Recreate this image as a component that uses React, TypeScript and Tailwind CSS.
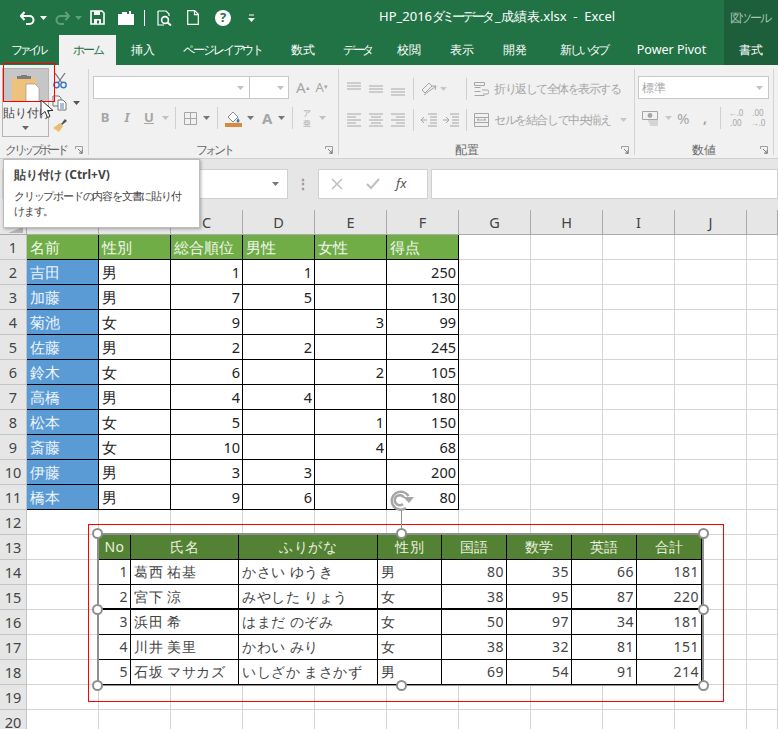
import React from "react";

const rows: [string, string, string, string, string, string][] = [
  ["吉田", "男", "1", "1", "", "250"],
  ["加藤", "男", "7", "5", "", "130"],
  ["菊池", "女", "9", "", "3", "99"],
  ["佐藤", "男", "2", "2", "", "245"],
  ["鈴木", "女", "6", "", "2", "105"],
  ["高橋", "男", "4", "4", "", "180"],
  ["松本", "女", "5", "", "1", "150"],
  ["斎藤", "女", "10", "", "4", "68"],
  ["伊藤", "男", "3", "3", "", "200"],
  ["橋本", "男", "9", "6", "", "80"],
];
const head = ["名前", "性別", "総合順位", "男性", "女性", "得点"];
const letters = ["A", "B", "C", "D", "E", "F", "G", "H", "I", "J", ""];

const picHead = ["No", "氏名", "ふりがな", "性別", "国語", "数学", "英語", "合計"];
const picRows = [
  ["1", "葛西 祐基", "かさい ゆうき", "男", "80", "35", "66", "181"],
  ["2", "宮下 涼", "みやした りょう", "女", "38", "95", "87", "220"],
  ["3", "浜田 希", "はまだ のぞみ", "女", "50", "97", "34", "181"],
  ["4", "川井 美里", "かわい みり", "女", "38", "32", "81", "151"],
  ["5", "石坂 マサカズ", "いしざか まさかず", "男", "69", "54", "91", "214"],
];

const tabs = [
  { t: "ファイル", c: "w-[59px] text-white pr-[4px] tracking-[-3.5px]" },
  { t: "ホーム", c: "w-[57px] bg-[#f1f1f1] text-[#217346] tracking-[-2px]" },
  { t: "挿入", c: "w-[53px] text-white" },
  { t: "ページ レイアウト", c: "w-[107px] text-white tracking-[-2.3px]" },
  { t: "数式", c: "w-[53px] text-white" },
  { t: "データ", c: "w-[53px] text-white pl-[4px] tracking-[-2.5px]" },
  { t: "校閲", c: "w-[53px] text-white" },
  { t: "表示", c: "w-[53px] text-white" },
  { t: "開発", c: "w-[53px] text-white" },
  { t: "新しいタブ", c: "w-[86px] text-white tracking-[-2.4px]" },
  { t: "Power Pivot", c: "w-[89px] text-white text-[12.5px]" },
];

const Caret = ({ className = "", color = "#a6a6a6" }: { className?: string; color?: string }) => (
  <svg width="7" height="4" viewBox="0 0 7 4" className={className}>
    <path d="M0 0h7L3.5 4z" fill={color} />
  </svg>
);

const VSep = ({ className = "" }: { className?: string }) => <div className={`w-px h-[22px] bg-[#d0d0d0] ${className}`} />;

const GroupLabel = ({ children, className = "" }: { children: React.ReactNode; className?: string }) => (
  <div className={`h-[10px] flex items-center justify-center text-[12px] text-[#666] whitespace-nowrap ${className}`}>{children}</div>
);

const Launcher = () => (
  <svg width="8" height="8" viewBox="0 0 8 8" className="absolute right-[5px] bottom-[1px]">
    <path d="M.5 3V.5H3M.5.5h7v7H5" fill="none" stroke="#a0a0a0" />
    <path d="M3 3l4 4M4 7h3V4" fill="none" stroke="#808080" />
  </svg>
);

const Lines = ({ kind }: { kind: "top" | "mid" | "bot" | "left" | "center" | "right" }) => {
  const d: Record<string, string> = {
    top: "M0 1h14M0 4h14M0 7h14",
    mid: "M0 4h14M0 7h14M0 10h14",
    bot: "M0 7h14M0 10h14M0 13h14",
    left: "M0 1h14M0 4h9M0 7h14M0 10h9M0 13h14",
    center: "M0 1h14M2 4h10M0 7h14M2 10h10M0 13h14",
    right: "M0 1h14M5 4h9M0 7h14M5 10h9M0 13h14",
  };
  return (
    <svg width="14" height="14" viewBox="0 0 14 14">
      <path d={d[kind]} stroke="#a8a8a8" strokeWidth="1" fill="none" />
    </svg>
  );
};

function Handle() {
  return <div className="w-[11px] h-[11px] rounded-full bg-white border-2 border-[#8f8f8f]" />;
}

function TitleBar() {
  return (
    <div className="h-[35px] flex items-center bg-[#217346] relative">
      <div className="flex items-center pl-[20px]">
        <svg width="15" height="14" viewBox="0 0 15 14">
          <path d="M1 5h8.5a4 4 0 0 1 0 8H6M4.500 1L1 5l3.500 4" fill="none" stroke="#fff" strokeWidth="2" />
        </svg>
        <Caret className="ml-[5px]" color="#ffffff" />
        <svg width="15" height="14" viewBox="0 0 15 14" className="ml-[8px]">
          <path d="M14 5H5.500a4 4 0 0 0 0 8H9M10.500 1L14 5l-3.500 4" fill="none" stroke="#5e9f7c" strokeWidth="2" />
        </svg>
        <Caret className="ml-[5px]" color="#5e9f7c" />
        <svg width="15" height="15" viewBox="0 0 15 15" className="ml-[8px]">
          <path d="M1 1h11l2 2v11H1z" fill="none" stroke="#fff" strokeWidth="1.6" />
          <path d="M4 1h6v4H4zM4 9h7v5H4z" fill="#fff" />
          <path d="M7 10.500h2v3H7z" fill="#217346" />
        </svg>
        <svg width="16" height="14" viewBox="0 0 16 14" className="ml-[13px]">
          <path d="M0 3h4V1h5v2h7v11H0z" fill="#fff" />
          <path d="M11 0h2v3h-2z" fill="#fff" />
        </svg>
        <div className="w-px h-[16px] bg-white ml-[10px]" />
        <svg width="15" height="16" viewBox="0 0 15 16" className="ml-[12px]">
          <path d="M1 1h8l3 3v2M1 1v14h6" fill="none" stroke="#fff" strokeWidth="1.2" />
          <circle cx="8" cy="10" r="3.4" fill="none" stroke="#fff" strokeWidth="1.6" />
          <path d="M10.500 12.500L14 15.500" stroke="#fff" strokeWidth="2" />
        </svg>
        <svg width="12" height="15" viewBox="0 0 12 15" className="ml-[15px]">
          <path d="M.7.7h7l3.600 3.600v10H.7zM7.500.7v4h3.800" fill="none" stroke="#fff" strokeWidth="1.2" />
        </svg>
        <div className="w-[16px] h-[16px] ml-[16px] rounded-full bg-white flex items-center justify-center text-[13px] font-bold leading-none text-[#217346]">?</div>
        <svg width="7" height="8" viewBox="0 0 7 8" className="ml-[17px]">
          <path d="M1 1h5" stroke="#fff" />
          <path d="M0 4h7L3.500 8z" fill="#fff" />
        </svg>
      </div>
      <div className="absolute left-[379px] top-[7px] text-[13px] leading-[19px] text-white whitespace-pre">
        HP_2016<span className="tracking-[-3px]">ダミーデータ</span><span className="ml-[3px]">_成績表.xlsx</span>{"  -  "}Excel
      </div>
      <div className="ml-auto w-[54px] h-full bg-[#1c5f3a] flex items-center pl-[6px] text-[12px] text-[#a9c6b6] whitespace-nowrap tracking-[-2px]">
        図ツール
      </div>
    </div>
  );
}

function TabBar() {
  return (
    <div className="h-[30px] flex bg-[#217346] text-[12px]">
      {tabs.map((t) => (
        <div key={t.t} className={`h-full flex items-center justify-center whitespace-nowrap ${t.c}`}>
          {t.t}
        </div>
      ))}
      <div className="ml-auto w-[54px] h-full bg-[#1c5f3a] flex items-center justify-center text-white">書式</div>
    </div>
  );
}

function ClipboardGroup() {
  return (
    <div className="w-[89px] relative border-r border-[#d4d4d4] mt-[4px] mb-[3px] flex flex-col">
      <div className="flex-1 flex">
        <div className="ml-[2px] mt-[-1px] w-[47px] h-[69px] border border-[#b4b4b4] flex flex-col">
          <div className="h-[33px] bg-[#c6c6c6] relative flex justify-center">
            <svg width="32" height="27" viewBox="0 0 32 27" className="mt-[6px] ml-[2px]">
              <path d="M1 3h24v24H1z" fill="#eec27d" />
              <path d="M6 1h14v3H6zM10 0h6v2h-6z" fill="#7d7d7d" />
              <path d="M15 9h9l4 4v14H15z" fill="#fff" stroke="#8c8c8c" strokeWidth=".6" />
            </svg>
          </div>
          <div className="flex-1 flex flex-col items-center">
            <div className="text-[12px] leading-[16px] mt-[3px] pl-[3px] text-[#444] whitespace-nowrap">貼り付け</div>
            <Caret className="mt-[5px]" color="#666" />
          </div>
        </div>
        <div className="ml-[3px] flex flex-col mt-[3px] gap-[6px]">
          <svg width="16" height="17" viewBox="0 0 16 17">
            <path d="M3 1l7 10M13 1L6 11" stroke="#777" strokeWidth="1.3" fill="none" />
            <circle cx="4.500" cy="13" r="2.7" fill="none" stroke="#3a78c4" strokeWidth="1.4" />
            <circle cx="11.500" cy="13" r="2.7" fill="none" stroke="#3a78c4" strokeWidth="1.4" />
          </svg>
          <div className="flex items-center">
            <svg width="16" height="16" viewBox="0 0 16 16">
              <path d="M1 1h6l2 2v8H1z" fill="#f1f1f1" stroke="#777" />
              <path d="M6 5h5l3 3v7H6z" fill="#fff" stroke="#777" />
              <path d="M8 9h4M8 11h4M8 13h4" stroke="#4a7fc1" />
            </svg>
            <Caret className="ml-[5px]" color="#555" />
          </div>
          <svg width="16" height="16" viewBox="0 0 16 16">
            <path d="M9 7l4-5 2 2-5 4z" fill="#555" />
            <path d="M1 11l7-5 3 3-4 6z" fill="#e9bd72" />
          </svg>
        </div>
      </div>
      <GroupLabel className="justify-start pl-[5px] tracking-[-3.4px]">クリップボード</GroupLabel>
      <Launcher />
    </div>
  );
}

function FontGroup() {
  return (
    <div className="w-[250px] relative border-r border-[#d4d4d4] mt-[4px] mb-[3px] flex flex-col">
      <div className="flex-1 pt-[7px]">
        <div className="flex items-center pl-[4px]">
          <div className="w-[157px] h-[23px] bg-white border border-[#c8c8c8] flex items-center justify-end pr-[5px]"><Caret color="#c0c0c0" /></div>
          <div className="w-[39px] h-[23px] bg-white border border-l-0 border-[#c8c8c8] flex items-center justify-end pr-[4px]"><Caret color="#c0c0c0" /></div>
          <div className="ml-[7px] text-[15px] leading-none text-[#a6a6a6]">A<sup className="text-[7px]">▴</sup></div>
          <div className="ml-[6px] text-[13px] leading-none text-[#a6a6a6]">A<sup className="text-[7px]">▾</sup></div>
        </div>
        <div className="flex items-center mt-[8px] h-[22px] text-[#a6a6a6]">
          <div className="ml-[10px] w-[12px] text-[13px] font-bold text-center">B</div>
          <div className="ml-[10px] w-[12px] text-[13px] italic font-bold text-center font-['Liberation_Serif',serif]">I</div>
          <div className="ml-[10px] w-[12px] text-[13px] font-bold text-center underline">U</div>
          <Caret className="ml-[7px]" color="#c0c0c0" />
          <VSep className="ml-[6px]" />
          <svg width="13" height="13" viewBox="0 0 13 13" className="ml-[8px]">
            <path d="M.5.5h12v12H.5zM6.500.5v12M.5 6.500h12" fill="none" stroke="#a6a6a6" />
          </svg>
          <Caret className="ml-[6px]" color="#777" />
          <VSep className="ml-[7px]" />
          <svg width="17" height="17" viewBox="0 0 17 17" className="ml-[7px]">
            <path d="M3 7l5-5 5 5-5 5z" fill="#fff" stroke="#8c8c8c" />
            <path d="M13 8c1 1.500 1.500 2 1.500 3a1.400 1.400 0 0 1-3 0" fill="#3b78c4" />
            <path d="M0 13h17v4H0z" fill="#d98a3d" />
          </svg>
          <Caret className="ml-[5px]" color="#777" />
          <div className="ml-[8px] text-[15px] font-bold leading-none">A</div>
          <Caret className="ml-[6px]" color="#777" />
          <VSep className="ml-[7px]" />
          <div className="ml-[9px] flex flex-col items-center text-[8px] leading-[10px] w-[10px]">
            <span>ア</span>
            <span>亜</span>
          </div>
          <Caret className="ml-[7px]" color="#c0c0c0" />
        </div>
      </div>
      <GroupLabel className="tracking-[-3px]">フォント</GroupLabel>
      <Launcher />
    </div>
  );
}

function AlignGroup() {
  return (
    <div className="w-[296px] relative border-r border-[#d4d4d4] mt-[4px] mb-[3px] flex flex-col">
      <div className="flex-1 pt-[9px] text-[12px] text-[#a6a6a6]">
        <div className="flex items-center h-[22px] pl-[8px]">
          <Lines kind="top" />
          <div className="ml-[8px]"><Lines kind="mid" /></div>
          <div className="ml-[8px]"><Lines kind="bot" /></div>
          <VSep className="ml-[8px]" />
          <svg width="16" height="16" viewBox="0 0 16 16" className="ml-[7px]">
            <path d="M1 9L8 2l3 3-7 7zM3 14l12-9M15 5l-4 0M15 5l-1 4" fill="none" stroke="#a6a6a6" />
          </svg>
          <Caret className="ml-[3px]" color="#c8c8c8" />
          <VSep className="ml-[19px]" />
          <svg width="15" height="15" viewBox="0 0 15 15" className="ml-[7px]">
            <path d="M.5.5h10v3H.5zM.5 5.500h6M.5 9.500h6M.5 13.500h10" fill="none" stroke="#a6a6a6" />
            <path d="M8 8h5a1.500 1.500 0 0 1 0 4H9" fill="none" stroke="#a6a6a6" />
          </svg>
          <span className="ml-[5px] whitespace-nowrap tracking-[-1.5px]">折り返して全体を表示する</span>
        </div>
        <div className="flex items-center h-[22px] mt-[9px] pl-[8px]">
          <Lines kind="left" />
          <div className="ml-[8px]"><Lines kind="center" /></div>
          <div className="ml-[8px]"><Lines kind="right" /></div>
          <VSep className="ml-[8px]" />
          <svg width="16" height="14" viewBox="0 0 16 14" className="ml-[7px]">
            <path d="M7 1h9M9 4h7M9 7h7M9 10h7M7 13h9M6 7H0M3 4L0 7l3 3" fill="none" stroke="#a6a6a6" />
          </svg>
          <svg width="16" height="14" viewBox="0 0 16 14" className="ml-[6px]">
            <path d="M7 1h9M9 4h7M9 7h7M9 10h7M7 13h9M0 7h6M3 4l3 3-3 3" fill="none" stroke="#a6a6a6" />
          </svg>
          <VSep className="ml-[7px]" />
          <svg width="15" height="14" viewBox="0 0 15 14" className="ml-[7px]">
            <path d="M.5.5h14v13H.5zM.5 4.500h14M.5 9.500h14M3 7h9M3 7l2-1.500M12 7l-2-1.500" fill="none" stroke="#a6a6a6" />
          </svg>
          <span className="ml-[5px] whitespace-nowrap tracking-[-1.4px]">セルを結合して中央揃え</span>
          <Caret className="ml-[9px]" color="#c8c8c8" />
        </div>
      </div>
      <GroupLabel className="pr-[40px]">配置</GroupLabel>
      <Launcher />
    </div>
  );
}

function NumberGroup() {
  return (
    <div className="w-[139px] relative border-r border-[#d4d4d4] mt-[4px] mb-[3px] flex flex-col">
      <div className="flex-1 pt-[7px] text-[#a6a6a6]">
        <div className="ml-[3px] w-[131px] h-[23px] bg-white border border-[#c8c8c8] flex items-center justify-between px-[3px] pr-[5px] text-[12px]">
          <span>標準</span>
          <Caret color="#c0c0c0" />
        </div>
        <div className="flex items-center h-[22px] mt-[8px] pl-[7px]">
          <svg width="17" height="15" viewBox="0 0 17 15">
            <path d="M.5.5h15v8H.5z" fill="none" stroke="#a6a6a6" />
            <circle cx="8" cy="4.500" r="2.400" fill="#a6a6a6" />
            <path d="M6 10h10M7 12h9M8 14h8" stroke="#b8b8b8" />
          </svg>
          <Caret className="ml-[6px]" color="#c8c8c8" />
          <span className="ml-[5px] text-[15px] leading-none w-[14px]">%</span>
          <span className="ml-[12px] text-[14px] font-bold leading-none">,</span>
          <VSep className="ml-[13px]" />
          <div className="ml-[7px] w-[16px] flex flex-col items-center text-[8px] leading-[10px] whitespace-nowrap">
            <span>←.0</span>
            <span>.00</span>
          </div>
          <div className="ml-[6px] w-[16px] flex flex-col items-center text-[8px] leading-[10px] whitespace-nowrap">
            <span>.00</span>
            <span>→.0</span>
          </div>
        </div>
      </div>
      <GroupLabel>数値</GroupLabel>
      <Launcher />
    </div>
  );
}

function Ribbon() {
  return (
    <div className="h-[93px] flex bg-[#f1f1f1]">
      <ClipboardGroup />
      <FontGroup />
      <AlignGroup />
      <NumberGroup />
    </div>
  );
}

function FormulaBar() {
  return (
    <div className="h-[52px] bg-[#e6e6e6] border-t border-[#d0d0d0] flex items-start pt-[10px]">
      <div className="ml-[2px] w-[286px] h-[30px] bg-white border border-[#d0d0d0] flex items-center justify-end pr-[8px]">
        <Caret color="#777" />
      </div>
      <div className="w-[30px] h-[30px] flex items-center justify-center text-[#999] text-[14px] font-bold leading-none">⋮</div>
      <div className="w-[110px] h-[30px] bg-white border border-[#d0d0d0] flex items-center">
        <svg width="12" height="12" viewBox="0 0 12 12" className="ml-[12px]">
          <path d="M1 1l10 10M11 1L1 11" stroke="#c0c0c0" strokeWidth="1.6" />
        </svg>
        <svg width="14" height="12" viewBox="0 0 14 12" className="ml-[23px]">
          <path d="M1 6l4 4 8-9" fill="none" stroke="#c0c0c0" strokeWidth="2" />
        </svg>
        <span className="ml-[16px] text-[13px] italic text-[#555] font-['Liberation_Serif',serif]">fx</span>
      </div>
      <div className="ml-[3px] flex-1 h-[30px] bg-white border border-[#d0d0d0]" />
    </div>
  );
}

function Sheet() {
  return (
    <div className="grid grid-cols-[27px_repeat(10,72px)_31px] auto-rows-[25px] text-[14.5px] leading-[24px] text-[#222]">
      <div className="bg-[#e6e6e6] border-r border-b border-[#ababab] relative">
        <svg width="15" height="6" viewBox="0 0 15 6" className="absolute right-[3px] bottom-[1px]">
          <path d="M0 6h15V0z" fill="#b4b4b4" />
        </svg>
      </div>
      {letters.map((l, i) => (
        <div key={i} className="bg-[#e6e6e6] border-r border-b border-[#ababab] flex items-center justify-center text-[#444]">
          {l === "A" || l === "B" ? "" : l}
        </div>
      ))}
      {Array.from({ length: 20 }, (_, r) => {
        const n = r + 1;
        const data = r === 0 ? head : r <= 10 ? rows[r - 1] : null;
        return (
          <React.Fragment key={r}>
            <div className="bg-[#e6e6e6] border-r border-b border-[#c4c4c4] flex items-center justify-center text-[#444]">{n}</div>
            {Array.from({ length: 11 }, (_, c) => {
              if (data && c < 6) {
                const isHead = r === 0;
                const isName = c === 0 && !isHead;
                const right = !isHead && c >= 2;
                const bg = isHead ? "bg-[#70ad47] text-[#f2f7ee]" : isName ? "bg-[#5b9bd5] text-[#eef5fb]" : "bg-white";
                return (
                  <div key={c} className={`border-r border-b border-black overflow-hidden whitespace-nowrap ${bg} ${right ? "text-right pr-[2px]" : "text-left pl-[3px]"}`}>
                    {data[c]}
                  </div>
                );
              }
              return <div key={c} className="bg-white border-r border-b border-[#d4d4d4]" />;
            })}
          </React.Fragment>
        );
      })}
    </div>
  );
}

function PictureOverlay() {
  return (
    <div className="absolute left-[88px] top-[524px] w-[636px] h-[178px] border border-[#ff0000]">
      <div className="absolute left-[8px] top-[8px] w-[607px] h-[153px] border-2 border-[#8f8f8f]">
        <div className="grid grid-cols-[32px_108px_139px_64px_65px_65px_65px_65px] grid-rows-[25px_25px_25px_25px_25px_25px] w-[603px] text-[14px] leading-[23px] tracking-[0.5px] bg-white">
          {picHead.map((h) => (
            <div key={h} className="bg-[#548235] text-[#e9f1df] text-center border-r border-b border-black">{h}</div>
          ))}
          {picRows.map((row, r) =>
            row.map((v, c) => (
              <div
                key={`${r}-${c}`}
                className={`border-r border-b border-black text-[#444] whitespace-nowrap overflow-hidden ${r === 1 ? "border-b-2" : ""} ${c === 0 || c >= 4 ? "text-right pr-[2px]" : "text-left pl-[3px]"}`}
              >
                {v}
              </div>
            ))
          )}
        </div>
      </div>
      <div className="absolute left-[312px] top-[-15px] w-px h-[23px] bg-[#8f8f8f]" />
      <div className="absolute left-[3px] top-[3px]"><Handle /></div>
      <div className="absolute left-[307px] top-[3px]"><Handle /></div>
      <div className="absolute left-[609px] top-[3px]"><Handle /></div>
      <div className="absolute left-[3px] top-[79px]"><Handle /></div>
      <div className="absolute left-[609px] top-[79px]"><Handle /></div>
      <div className="absolute left-[3px] top-[155px]"><Handle /></div>
      <div className="absolute left-[307px] top-[155px]"><Handle /></div>
      <div className="absolute left-[609px] top-[155px]"><Handle /></div>
    </div>
  );
}

export default function App() {
  return (
    <div className="w-[778px] h-[729px] overflow-hidden relative bg-white font-['Noto_Sans','Noto_Sans_CJK_JP',sans-serif]">
      <TitleBar />
      <TabBar />
      <Ribbon />
      <FormulaBar />
      <Sheet />
      <PictureOverlay />
      <svg width="26" height="24" viewBox="0 0 26 24" className="absolute left-[389px] top-[488px]">
        <path d="M19.500 8A9 9 0 1 0 17 20" fill="none" stroke="#a6a6a6" strokeWidth="2.500" />
        <path d="M15 9.500A5 5 0 1 0 14 16" fill="none" stroke="#a6a6a6" strokeWidth="2.500" />
        <path d="M14 9l11 0-5 6z" fill="#a6a6a6" />
      </svg>
      <div className="absolute left-[3px] top-[63px] w-[52px] h-[39px] border border-[#ff0000]" />
      <svg width="14" height="20" viewBox="0 0 14 20" className="absolute left-[40px] top-[99px]">
        <path d="M1 1v15l4-3.500 2.500 6 2.500-1-2.500-6H13z" fill="#fff" stroke="#333" strokeWidth="1" />
      </svg>
      <div className="absolute left-[3px] top-[159px] w-[197px] h-[69px] bg-white border border-[#bdbdbd] shadow-[1px_1px_3px_rgba(0,0,0,0.3)] px-[10px] pt-[6px] text-[#444]">
        <div className="text-[12px] leading-[18px] font-bold whitespace-nowrap">貼り付け (Ctrl+V)</div>
        <div className="text-[11px] leading-[15px] mt-[4px] tracking-[-1.2px] whitespace-nowrap">
          クリップボードの内容を文書に貼り付
          <br />
          けます。
        </div>
      </div>
    </div>
  );
}
